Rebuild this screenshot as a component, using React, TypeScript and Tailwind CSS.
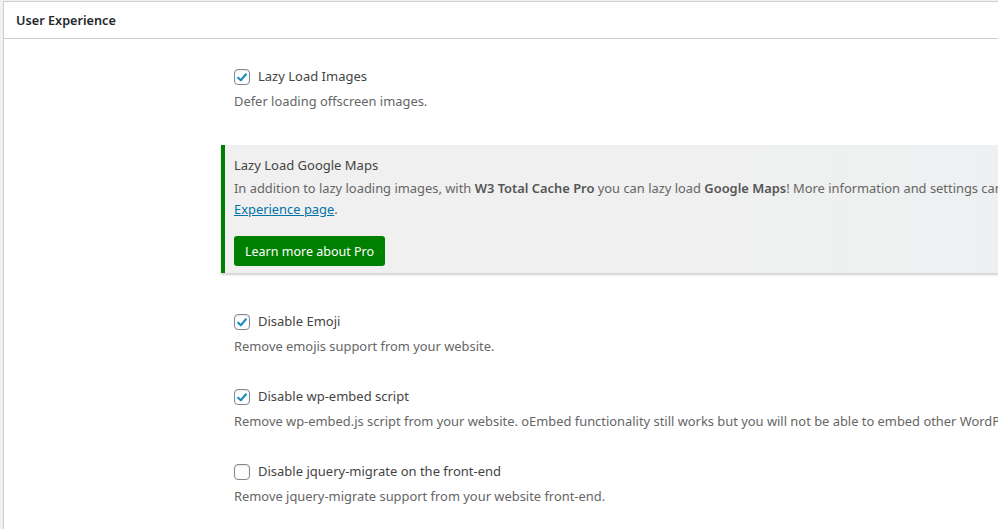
import React from "react";

const font = { fontFamily: '"Noto Sans", "Open Sans", Arial, sans-serif' };

function Check({ checked }: { checked: boolean }) {
  return (
    <span className="w-[16px] h-[16px] rounded-[4px] border border-[#7e8993] bg-white flex items-center justify-center shrink-0 shadow-[inset_0_1px_2px_rgba(0,0,0,0.1)]">
      {checked && (
        <svg width="15" height="15" viewBox="0 0 20 20">
          <path d="M4.5 10.2 L8.3 14 L15.6 5.4" fill="none" stroke="#1e8cbe" strokeWidth="3" strokeLinecap="round" strokeLinejoin="round" />
        </svg>
      )}
    </span>
  );
}

function Option({ checked, label, desc, className }: { checked: boolean; label: string; desc: string; className?: string }) {
  return (
    <div className={className}>
      <div className="h-[20px] flex items-center gap-[8px] text-[13px] text-[#444444] whitespace-nowrap">
        <Check checked={checked} />
        <span>{label}</span>
      </div>
      <div className="mt-[4px] leading-[20px] text-[12.9px] text-[#666666] whitespace-nowrap">{desc}</div>
    </div>
  );
}

export default function App() {
  return (
    <div className="w-[998px] h-[529px] overflow-hidden bg-[#f1f1f1] pt-px pl-[3px]" style={font}>
      <div className="w-[1100px] h-[600px] bg-white border border-[#ccd0d4]">
        <div className="h-[37px] border-b border-[#ccd0d4] flex items-center pl-[12px] pt-px text-[12.7px] font-semibold text-[#23282d]">
          User Experience
        </div>
        <div className="pt-[28px]">
          <Option className="pl-[230px]" checked label="Lazy Load Images" desc="Defer loading offscreen images." />
          <div className="ml-[217px] mt-[34px] border-l-[4px] border-[#008000] bg-gradient-to-r from-[#f0f0f0] via-[#f0f0f0] to-[#edf1f2] shadow-[0_2px_2px_rgba(0,0,0,0.18)] pl-[9px] pt-[10px] pb-[7px] text-[12.9px] leading-[21px] whitespace-nowrap">
            <div className="text-[#444444] mb-[2px] text-[13px]">Lazy Load Google Maps</div>
            <div className="text-[#666666]">
              In addition to lazy loading images, with <span className="font-semibold text-[#555555]">W3 Total Cache Pro</span> you can lazy load{" "}
              <span className="font-semibold text-[#555555]">Google Maps</span>! More information and settings can be found on the User
            </div>
            <div className="text-[#666666]">
              <a className="text-[#0073aa] underline">Experience page</a>.
            </div>
            <button className="mt-[16px] h-[30px] w-[151px] rounded-[3px] bg-[#008000] text-white text-[12.5px] flex items-center justify-center">
              Learn more about Pro
            </button>
          </div>
          <Option className="pl-[230px] mt-[39px]" checked label="Disable Emoji" desc="Remove emojis support from your website." />
          <Option
            className="pl-[230px] mt-[31px]"
            checked
            label="Disable wp-embed script"
            desc="Remove wp-embed.js script from your website. oEmbed functionality still works but you will not be able to embed other WordPress posts on your pages."
          />
          <Option
            className="pl-[230px] mt-[31px]"
            checked={false}
            label="Disable jquery-migrate on the front-end"
            desc="Remove jquery-migrate support from your website front-end."
          />
        </div>
      </div>
    </div>
  );
}
